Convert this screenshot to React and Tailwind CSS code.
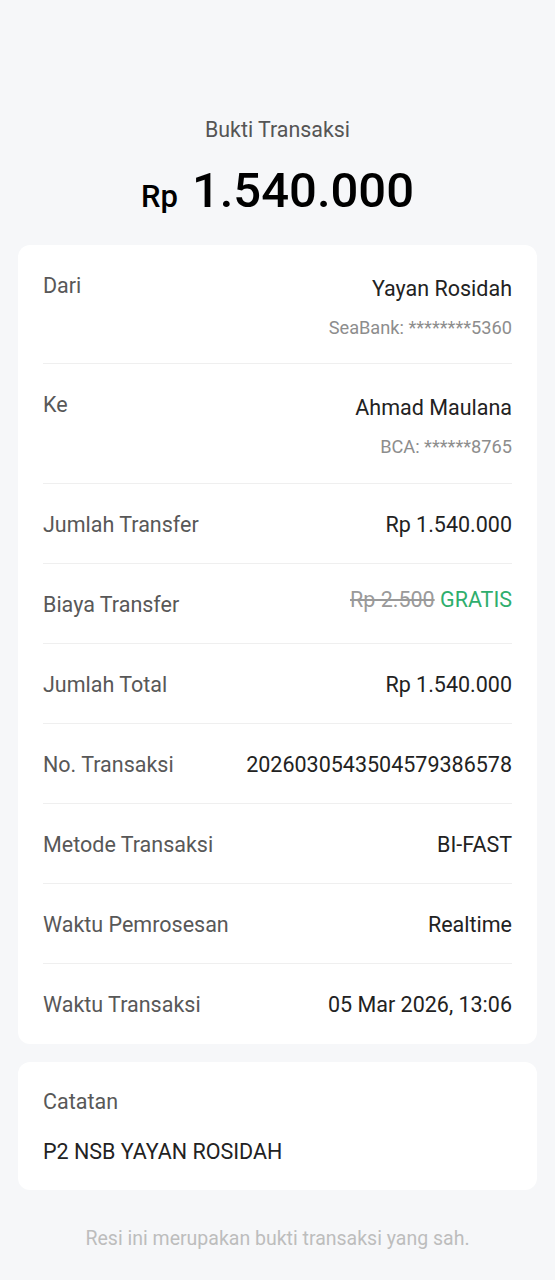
import React from 'react';

const rows = [
  { label: 'Jumlah Transfer', value: 'Rp 1.540.000' },
  { label: 'Biaya Transfer', fee: true },
  { label: 'Jumlah Total', value: 'Rp 1.540.000' },
  { label: 'No. Transaksi', value: '2026030543504579386578' },
  { label: 'Metode Transaksi', value: 'BI-FAST' },
  { label: 'Waktu Pemrosesan', value: 'Realtime' },
  { label: 'Waktu Transaksi', value: '05 Mar 2026, 13:06' },
];

const parties = [
  { label: 'Dari', name: 'Yayan Rosidah', account: 'SeaBank: ********5360' },
  { label: 'Ke', name: 'Ahmad Maulana', account: 'BCA: ******8765' },
];

const App = () => {
  return (
    <div className="min-h-[1280px] w-full bg-[#f6f7f9] font-['Roboto',sans-serif] px-[18px] pt-[117px] pb-10">
      <div className="flex flex-col items-center">
        <p className="text-[21.4px] leading-[26px] text-[#555]">Bukti Transaksi</p>
        <div className="mt-[20px] flex items-baseline gap-[14px] text-black font-medium">
          <span className="text-[31px]">Rp</span>
          <span className="text-[49px] leading-[56px]">1.540.000</span>
        </div>
      </div>

      <div className="mt-[24px] rounded-xl bg-white px-[25px]">
        {parties.map((p) => (
          <div key={p.label} className="flex justify-between border-b border-[#efefef] pt-[29px] pb-[23.5px]">
            <span className="text-[21.5px] leading-6 text-[#585858]">{p.label}</span>
            <div className="flex flex-col items-end">
              <span className="mt-[3px] text-[21.5px] leading-6 text-[#222]">{p.name}</span>
              <span className="mt-[15px] text-[18.2px] leading-6 text-[#8d8d8d]">{p.account}</span>
            </div>
          </div>
        ))}
        {rows.map((r, i) => (
          <div
            key={r.label}
            className={`flex h-20 items-center justify-between pt-[3px] ${i < rows.length - 1 ? 'border-b border-[#efefef]' : ''}`}
          >
            <span className="text-[21.5px] leading-6 text-[#585858]">{r.label}</span>
            {r.fee ? (
              <span className="-mt-[10px] text-[21.5px] leading-6">
                <span className="text-[#9a9a9a] line-through">Rp 2.500</span>{' '}
                <span className="text-[#2fae6d]">GRATIS</span>
              </span>
            ) : (
              <span className="text-[21.5px] leading-6 text-[#222]">{r.value}</span>
            )}
          </div>
        ))}
      </div>

      <div className="mt-[18px] rounded-xl bg-white px-[25px] pt-[28px] pb-[26px]">
        <p className="text-[21.5px] leading-6 text-[#585858]">Catatan</p>
        <p className="mt-[26px] text-[21.5px] leading-6 text-[#222]">P2 NSB YAYAN ROSIDAH</p>
      </div>

      <p className="mt-[37px] text-center text-[19.5px] leading-6 text-[#bdbdbd]">
        Resi ini merupakan bukti transaksi yang sah.
      </p>
    </div>
  );
};

export default App;
